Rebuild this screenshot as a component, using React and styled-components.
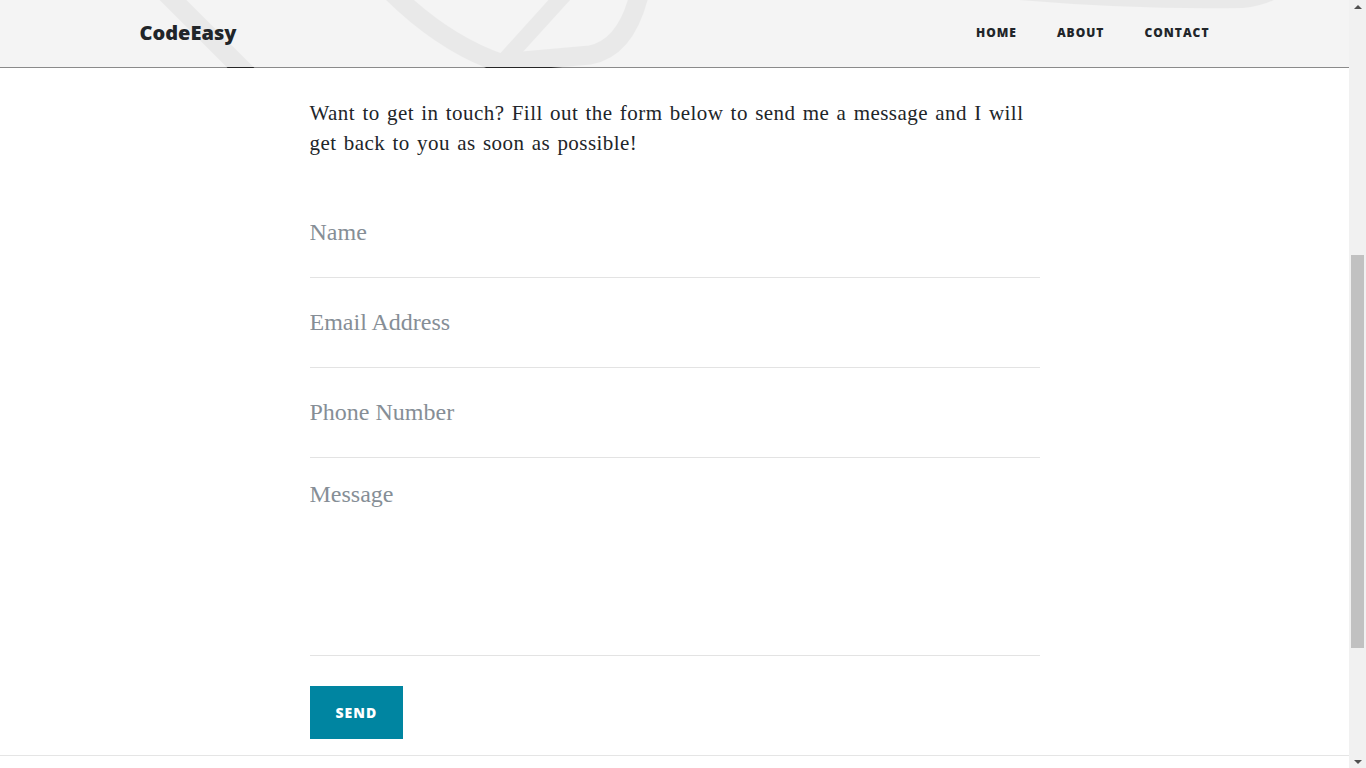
import React, { useLayoutEffect, useRef } from 'react';
import styled, { createGlobalStyle } from 'styled-components';
import { FaTwitter, FaFacebookF, FaGithub } from 'react-icons/fa';

const GlobalStyle = createGlobalStyle`
body {
  margin: 0;
  overflow: hidden;
  background: #fff;
  color: #212529;
  font-family: "Liberation Serif", "Times New Roman", serif;
}
* {
  box-sizing: border-box;
}
`

const App = () => {
    const scroller = useRef(null);

    // the reference is photographed part way down the page
    useLayoutEffect(() => {
        if (scroller.current) scroller.current.scrollTop = 465;
    }, []);

    return (
        <Frame>
            <GlobalStyle />
            <PageArea>
                <Nav>
                    <NavInner>
                        <Brand href="#">CodeEasy</Brand>
                        <NavLinks>
                            <NavLink href="#">Home</NavLink>
                            <NavLink href="#">About</NavLink>
                            <NavLink href="#">Contact</NavLink>
                        </NavLinks>
                    </NavInner>
                </Nav>

                <Scroller ref={scroller}>
                    <Masthead>
                        <Swirl viewBox="0 0 1349 533" preserveAspectRatio="xMinYMin slice">
                            <g fill="none" stroke="#262626" strokeLinecap="round" strokeLinejoin="round">
                                <path d="M 88 380 L 258 550" strokeWidth="19" />
                                <path d="M 350 410 Q 420 500 500 528 L 590 520 Q 632 512 643 440" strokeWidth="19" />
                                <path d="M 600 420 L 504 526" strokeWidth="16" />
                                <path d="M 880 438 Q 1080 464 1242 461 Q 1280 458 1298 425" strokeWidth="24" />
                            </g>
                        </Swirl>
                        <Heading>
                            <h1>Contact Me</h1>
                            <span>Have questions? I have answers.</span>
                        </Heading>
                    </Masthead>

                    <Column>
                        <Intro>
                            Want to get in touch? Fill out the form below to send me a message and I will get back to you as soon as possible!
                        </Intro>
                        <form onSubmit={(e) => e.preventDefault()}>
                            <Field>
                                <Input type="text" placeholder="Name" />
                            </Field>
                            <Field>
                                <Input type="email" placeholder="Email Address" />
                            </Field>
                            <Field>
                                <Input type="tel" placeholder="Phone Number" />
                            </Field>
                            <MessageField>
                                <TextArea rows={5} placeholder="Message" />
                            </MessageField>
                            <SendButton type="submit">Send</SendButton>
                        </form>
                    </Column>

                    <Rule />

                    <Footer>
                        <Socials>
                            <Social href="#"><FaTwitter /></Social>
                            <Social href="#"><FaFacebookF /></Social>
                            <Social href="#"><FaGithub /></Social>
                        </Socials>
                        <Copyright>Copyright &copy; CodeEasy 2020</Copyright>
                    </Footer>
                </Scroller>
            </PageArea>

            <Scrollbar>
                <Arrow $dir="up" />
                <Track>
                    <Thumb />
                </Track>
                <Arrow $dir="down" />
            </Scrollbar>
        </Frame>
    )
}

const Frame = styled.div`
display: flex;
height: 100vh;
`

const PageArea = styled.div`
position: relative;
flex: 1;
min-width: 0;
`

const Scroller = styled.div`
height: 100%;
overflow-y: auto;
scrollbar-width: none;
&::-webkit-scrollbar {
  display: none;
}
`

const Nav = styled.nav`
position: absolute;
top: 0;
left: 0;
right: 0;
z-index: 10;
height: 67px;
background: rgba(255, 255, 255, 0.9);
`

const NavInner = styled.div`
display: flex;
align-items: center;
justify-content: space-between;
max-width: 1140px;
height: 100%;
margin: 0 auto;
padding: 0 15px 2px 35px;
`

const Brand = styled.a`
font-family: "Open Sans", sans-serif;
font-weight: 800;
font-size: 20px;
color: #212529;
text-decoration: none;
`

const NavLinks = styled.div`
display: flex;
`

const NavLink = styled.a`
padding: 0 20px;
font-family: "Open Sans", sans-serif;
font-weight: 800;
font-size: 12px;
letter-spacing: 1px;
text-transform: uppercase;
color: #212529;
text-decoration: none;
`

const Masthead = styled.header`
position: relative;
height: 533px;
overflow: hidden;
background: #8a8a8a;
`

const Swirl = styled.svg`
position: absolute;
top: 0;
left: 0;
width: 100%;
height: 100%;
`

const Heading = styled.div`
position: relative;
display: flex;
flex-direction: column;
align-items: center;
padding-top: 200px;
color: #fff;
text-align: center;
h1 {
  margin: 0;
  font-family: "Open Sans", sans-serif;
  font-weight: 800;
  font-size: 80px;
}
span {
  margin-top: 10px;
  font-family: "Open Sans", sans-serif;
  font-weight: 300;
  font-size: 24px;
}
`

const Column = styled.main`
width: 730px;
margin: 0 auto;
`

const Intro = styled.p`
margin: 30px 0;
font-size: 21px;
line-height: 30px;
letter-spacing: 0.45px;
word-spacing: 1.6px;
color: #212529;
`

const Field = styled.div`
padding: 26px 0 27px;
border-bottom: 1px solid #e3e3e3;
`

const MessageField = styled.div`
padding-top: 18px;
border-bottom: 1px solid #e3e3e3;
`

const Input = styled.input`
display: block;
width: 100%;
height: 36px;
padding: 0;
border: none;
outline: none;
background: transparent;
font-family: "Liberation Serif", "Times New Roman", serif;
font-size: 24px;
line-height: 36px;
color: #212529;
&::placeholder {
  color: #868e96;
  opacity: 1;
}
`

const TextArea = styled.textarea`
display: block;
width: 100%;
height: 179px;
padding: 0;
border: none;
outline: none;
resize: none;
background: transparent;
font-family: "Liberation Serif", "Times New Roman", serif;
font-size: 24px;
line-height: 36px;
color: #212529;
&::placeholder {
  color: #868e96;
  opacity: 1;
}
`

const SendButton = styled.button`
display: block;
margin-top: 30px;
padding: 15px 25px;
border: 1px solid #0085a1;
border-radius: 0;
background: #0085a1;
color: #fff;
font-family: "Open Sans", sans-serif;
font-weight: 800;
font-size: 14px;
line-height: 21px;
letter-spacing: 1px;
text-transform: uppercase;
cursor: pointer;
`

const Rule = styled.hr`
margin: 16px 0 0;
border: none;
border-top: 1px solid #e5e5e5;
`

const Footer = styled.footer`
display: flex;
flex-direction: column;
align-items: center;
padding: 50px 0 65px;
`

const Socials = styled.div`
display: flex;
gap: 16px;
`

const Social = styled.a`
display: flex;
align-items: center;
justify-content: center;
width: 56px;
height: 56px;
border-radius: 50%;
background: #212529;
color: #fff;
font-size: 24px;
`

const Copyright = styled.p`
margin: 20px 0 0;
font-size: 14px;
line-height: 23px;
color: #868e96;
`

const Scrollbar = styled.div`
display: flex;
flex-direction: column;
width: 17px;
flex-shrink: 0;
background: #f1f1f1;
`

const Arrow = styled.div`
display: flex;
align-items: center;
justify-content: center;
height: 17px;
&::before {
  content: "";
  border-left: 4px solid transparent;
  border-right: 4px solid transparent;
  ${(p) => p.$dir === 'up'
        ? 'border-bottom: 4px solid #505050; margin-top: -4px;'
        : 'border-top: 4px solid #505050; margin-top: 4px;'}
}
`

const Track = styled.div`
flex: 1;
padding: 0 2px;
`

const Thumb = styled.div`
height: 393px;
margin-top: 238px;
background: #c1c1c1;
`

export default App;
